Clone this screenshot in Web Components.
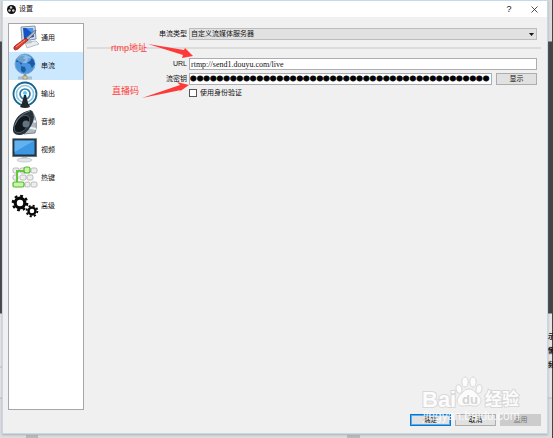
<!DOCTYPE html>
<html lang="zh-CN">
<head>
<meta charset="utf-8">
<title>设置</title>
<style>
body{margin:0;font:7px/10px "Liberation Sans","Noto Sans CJK SC",sans-serif;color:#111}
</style>
</head>
<body>
<settings-app></settings-app>
<script>
const define=(name,html,setup)=>customElements.define(name,class extends HTMLElement{
  constructor(){super();this.attachShadow({mode:'open'}).innerHTML=html;}
  connectedCallback(){if(setup)setup(this,this.shadowRoot);}
});

const icons={
general:`<path d="M9 2L23 1 24 14 10 16Z" fill="#d5dde5" stroke="#8593a3"/><path d="M11 3L21 3 22 12 12 14Z" fill="#1553c4"/><path d="M14 3L21 3 21 9Z" fill="#4c92ee"/><path d="M13 17L24 16 27 19 15 23Z" fill="#e8edf1" stroke="#9ba6b2" stroke-width=".7"/><path d="M14 15h5l1 3-6 1z" fill="#b7c2cd"/><path d="M13 14L22 6 24 5 23 8 15 16Z" fill="#aeb8c1" stroke="#4c5868" stroke-width=".6"/><path d="M14 13L16 15 6 24Q3 26 2 24T4 20Z" fill="#e23b2a" stroke="#96140e" stroke-width=".7"/><path d="M4 22L13 15" stroke="#ff9a84"/>`,
stream:`<circle cx="13" cy="11" r="10" fill="#4b95de" stroke="#7ba6d2"/><path d="M5 6Q8 2 13 3L11 5 14 7 11 9 9 12 7 9 4 9ZM16 5L21 6 23 11 20 15 18 11 15 10ZM9 13L13 14 14 17 12 20 9 18Z" fill="#1b5ba6"/><ellipse cx="12" cy="6" rx="7" ry="4" fill="#d5efff" opacity=".45"/><path d="M13 21v3M6 25h14" stroke="#7d98b2" stroke-width="2.5"/><path d="M6 25h14" stroke="#dbe3eb"/><rect x="11" y="23" width="4" height="3" fill="#dfcf9b" stroke="#988254" stroke-width=".6"/>`,
output:`<g fill="none"><circle cx="13" cy="13" r="11.5" stroke="#17648f" stroke-width="1.8"/><circle cx="13" cy="13" r="8.5" stroke="#8fc4e0" stroke-width="1.6"/><circle cx="13" cy="13" r="5" stroke="#2c7dab" stroke-width="1.7"/></g><path d="M12 14h2l2 8 2 4q-5 2-10 0l2-4z" fill="#20262b"/><circle cx="13" cy="12" r="2" fill="#55c9ff"/>`,
audio:`<path d="M20 2Q27 13 23 24L12 25Z" fill="#b1bac1" stroke="#59646d" stroke-width=".7"/><path d="M17 10l7 3M15 18l9 2" stroke="#edf2f4" stroke-width="2"/><path d="M19 1Q25 7 19 17T7 26Q0 26 1 19 3 4 19 1Z" fill="#25313b"/><ellipse cx="10" cy="15" rx="6" ry="10" transform="rotate(38 10 15)" fill="#10171d" stroke="#526370" stroke-width=".8"/><circle cx="14" cy="15" r="3.5" fill="#63737f"/><path d="M18 2Q7 5 3 16" stroke="#8298a8" fill="none" stroke-width=".7"/>`,
video:`<rect x=".7" y="1.7" width="24" height="18" fill="#24323d" stroke="#6a7781" stroke-width=".7"/><rect x="2.5" y="3.5" width="20" height="14" fill="#3c98e4"/><path d="M2.5 3.5h20L2.5 15Z" fill="#77c0f6" opacity=".65"/><path d="M10 20h5l1 3h-7z" fill="#bcc6ca"/><ellipse cx="12.5" cy="23" rx="7.5" ry="2" fill="#e2e6e8" stroke="#adb5ba" stroke-width=".6"/>`,
keys:`<g fill="#eee" stroke="#aaa" stroke-width=".8"><rect x="1" y="3" width="6" height="5" rx="1.5"/><rect x="8" y="3" width="6" height="5" rx="1.5"/><rect x="19" y="3" width="6" height="5" rx="1.5"/><rect x="1" y="10" width="5" height="5" rx="1.5"/><rect x="8" y="10" width="6" height="5" rx="1.5"/><rect x="15" y="10" width="6" height="5" rx="1.5"/><rect x="13" y="17" width="5" height="5" rx="1.5"/><rect x="19" y="17" width="6" height="5" rx="1.5"/></g><path d="M13 6H5v11" fill="none" stroke="#65c83c" stroke-width="2"/><g fill="#c8f5a8" stroke="#54b62d" stroke-width="1.2"><rect x="12" y="2" width="6" height="6" rx="2"/><rect x="1" y="17" width="11" height="5" rx="1.5"/></g>`,
advanced:`<g fill="none" stroke="#080808"><circle cx="8" cy="10" r="4.8" stroke-width="3.2"/><circle cx="8" cy="10" r="7.2" stroke-width="2.3" stroke-dasharray="2.8 2.85"/><circle cx="20" cy="18" r="3.5" stroke-width="2.4"/><circle cx="20" cy="18" r="5.4" stroke-width="1.8" stroke-dasharray="2.1 2.14"/></g>`
};

define('nav-item',`<style>
:host{display:block}button{all:unset;box-sizing:border-box;display:flex;align-items:center;width:100%;height:28px;padding-left:3px;gap:3px;cursor:pointer}
:host([selected]) button{background:#cce8ff}svg{width:26px;height:27px;overflow:visible;flex:none}
</style><button type="button"><svg viewBox="0 0 26 27" aria-hidden="true"></svg><span><slot></slot></span></button>`,
(h,r)=>{r.querySelector('svg').innerHTML=icons[h.getAttribute('icon')];});

define('side-nav',`<style>
:host{display:block;box-sizing:border-box;width:76px;border:1px solid #a3a6ab;background:#fff}
</style><slot></slot>`);

define('push-button',`<style>
:host{display:block;width:41px;height:12px}button{box-sizing:border-box;width:100%;height:100%;display:grid;place-items:center;padding:0;border:1px solid #adadad;background:#e1e1e1;color:#111;font:inherit}
:host([primary]) button{border:1px solid #0078d7;box-shadow:inset 0 0 0 1px #60aae6}
button:disabled{border-color:#ccc;background:#ccc;color:#777}
</style><button type="button"><slot></slot></button>`,
(h,r)=>{r.querySelector('button').disabled=h.hasAttribute('disabled');});

define('title-bar',`<style>
:host{display:flex;align-items:center;height:16px;background:#fff;padding:0 8px 0 4px;gap:3px}
svg{display:block}.grow{flex:1}button{all:unset;width:10px;height:12px;display:grid;place-items:center;font-size:9px}.close{margin-left:12px}
</style><svg width="9" height="9" viewBox="0 0 18 18"><circle cx="9" cy="9" r="9" fill="#111"/><g fill="#d0d0d0"><circle cx="8" cy="5" r="2.5"/><circle cx="5" cy="11" r="2.5"/><circle cx="12.5" cy="11" r="2.5"/></g></svg>
<span class="grow"><slot></slot></span><button aria-label="帮助">?</button><button class="close" aria-label="关闭"><svg width="7" height="7" viewBox="0 0 7 7"><path d="M.5.5l6 6m0-6l-6 6" stroke="#222" stroke-width=".8"/></svg></button>`);

define('stream-form',`<style>
:host{display:block;flex:1;padding:5px 6px 0 3px}
.row{display:grid;grid-template-columns:100px 1fr;column-gap:2px;align-items:center;padding-right:4px}
.row>label:first-child{text-align:right}
.type{padding-bottom:7px}hr{margin:0 0 9px;border:0;height:2px;background:#dcdcdc}
.url,.key{padding-bottom:3px}
input,select{box-sizing:border-box;min-width:0;width:100%;height:12px;margin:0;border:1px solid #abadb3;border-radius:0;outline:0;color:#111;font:inherit}
.drop{display:grid}.drop>*{grid-area:1/1}
select{appearance:none;border-color:#bdbdbd;background:#e1e1e1;padding:0 12px 0 1px}
.drop svg{justify-self:end;align-self:center;margin-right:3px;pointer-events:none}
.text{background:#fff;padding:0 1px}#url{font:8px/10px "Liberation Serif",serif}
.pair{display:flex;gap:4px}#key{flex:1;width:0;padding:0;font:19px/10px "Liberation Sans",sans-serif;color:#000;-webkit-text-stroke:1px #000}
.check{display:flex;align-items:center;gap:3px;grid-column:2}
.check input{appearance:none;width:8px;height:8px;border-color:#555;background:#fff}
</style>
<div class="row type"><label for="type">串流类型</label><div class="drop"><select id="type"><option>自定义流媒体服务器</option></select><svg width="5" height="3" viewBox="0 0 5 3"><path d="M0 0h5L2.5 3z" fill="#111"/></svg></div></div>
<hr>
<div class="row url"><label for="url">URL</label><input id="url" class="text" value="rtmp://send1.douyu.com/live"></div>
<div class="row key"><label for="key">流密钥</label><div class="pair"><input id="key" class="text" type="password"><push-button>显示</push-button></div></div>
<div class="row"><div class="check"><input id="auth" type="checkbox"><label for="auth">使用身份验证</label></div></div>`,
(h,r)=>{r.querySelector('#key').value='x'.repeat(45);});

define('red-notes',`<style>
:host{position:absolute;left:0;top:0;pointer-events:none;color:#ff3b3b;font-size:9px;line-height:12px}
span{position:absolute;white-space:nowrap}.a{left:111px;top:42px}.b{left:112px;top:85px}svg{display:block}
</style><svg width="200" height="110"><g fill="#ff3838"><path d="M148 44L184 50 185 48 193 56 182 58 183 55Z"/><path d="M142 98L181 90 179 92 189 85 177 82 180 85Z"/></g></svg><span class="a">rtmp地址</span><span class="b">直播码</span>`);

define('site-mark',`<style>
:host{position:absolute;right:33px;bottom:10px;width:98px;height:52px;pointer-events:none;color:#fff;opacity:.85}
span{position:absolute;white-space:nowrap;-webkit-text-stroke:2px #d4d4d4;paint-order:stroke fill}
.bai{left:0;top:13px;font:bold 22px/22px "Liberation Sans",sans-serif}span.du{left:40px;top:17px;font:bold 13px/14px "Liberation Sans",sans-serif;color:#cfcfcf;-webkit-text-stroke:0}
.jy{left:63px;top:11px;font:bold 17px/22px "Noto Sans CJK SC",sans-serif}span.url{left:1px;top:34px;font:12px/12px "Liberation Sans",sans-serif;-webkit-text-stroke:0}
svg{position:absolute;left:32px;top:0}
</style><svg width="30" height="34" viewBox="0 0 30 34"><g fill="#fff" stroke="#d0d0d0" stroke-width=".9"><ellipse cx="5" cy="13" rx="3" ry="4.5" transform="rotate(-12 5 13)"/><ellipse cx="11" cy="6" rx="3.2" ry="5"/><ellipse cx="19" cy="6" rx="3.2" ry="5"/><ellipse cx="25" cy="13" rx="3" ry="4.5" transform="rotate(12 25 13)"/><path d="M15 13C20 13 21 17 25 20 30 25 25 31 20 30Q15 29 10 30C4 31 1 25 5 20 9 17 10 13 15 13Z"/></g></svg><span class="bai">Bai</span><span class="du">du</span><span class="jy">经验</span><span class="url">jingyan.baidu.com</span>`);

define('settings-app',`<style>
:host{position:relative;display:flex;box-sizing:border-box;min-height:100vh;padding:0 5px 4px 2px;
background:linear-gradient(#444,#444) right/1px 100% no-repeat,linear-gradient(#bbb,#bbb) 26px 100%/12px 3px no-repeat,linear-gradient(#bbb,#bbb) 347px 100%/13px 3px no-repeat,linear-gradient(#dadada 0 41px,#444 42px 313px,#e4e4e4 314px 366px,#bdbdbd 367px,#e4e4e4 368px 397px,#bdbdbd 398px,#dedede 399px)}
.dialog{flex:1;display:flex;flex-direction:column;min-width:0;border:1px solid #c3d9ec;background:#f0f0f0;box-shadow:0 1px 2px #8888}
title-bar{margin-bottom:6px}main{flex:1;display:flex;padding-left:5px}
side-nav{flex:none}footer{display:flex;justify-content:flex-end;gap:4px;padding:4px 6px 7px}
.edge{position:absolute;right:0;top:332px;width:5px;overflow:hidden;display:grid;gap:4px;font-weight:bold}
</style>
<div class="dialog"><title-bar>设置</title-bar>
<main><side-nav><nav-item icon="general">通用</nav-item><nav-item icon="stream" selected>串流</nav-item><nav-item icon="output">输出</nav-item><nav-item icon="audio">音频</nav-item><nav-item icon="video">视频</nav-item><nav-item icon="keys">热键</nav-item><nav-item icon="advanced">高级</nav-item></side-nav><stream-form></stream-form></main>
<footer><push-button primary>确定</push-button><push-button>取消</push-button><push-button disabled>适用</push-button></footer></div>
<div class="edge" aria-hidden="true"><span>示</span><span>懒</span><span>频</span></div>
<red-notes></red-notes><site-mark></site-mark>`);
</script>
</body>
</html>
